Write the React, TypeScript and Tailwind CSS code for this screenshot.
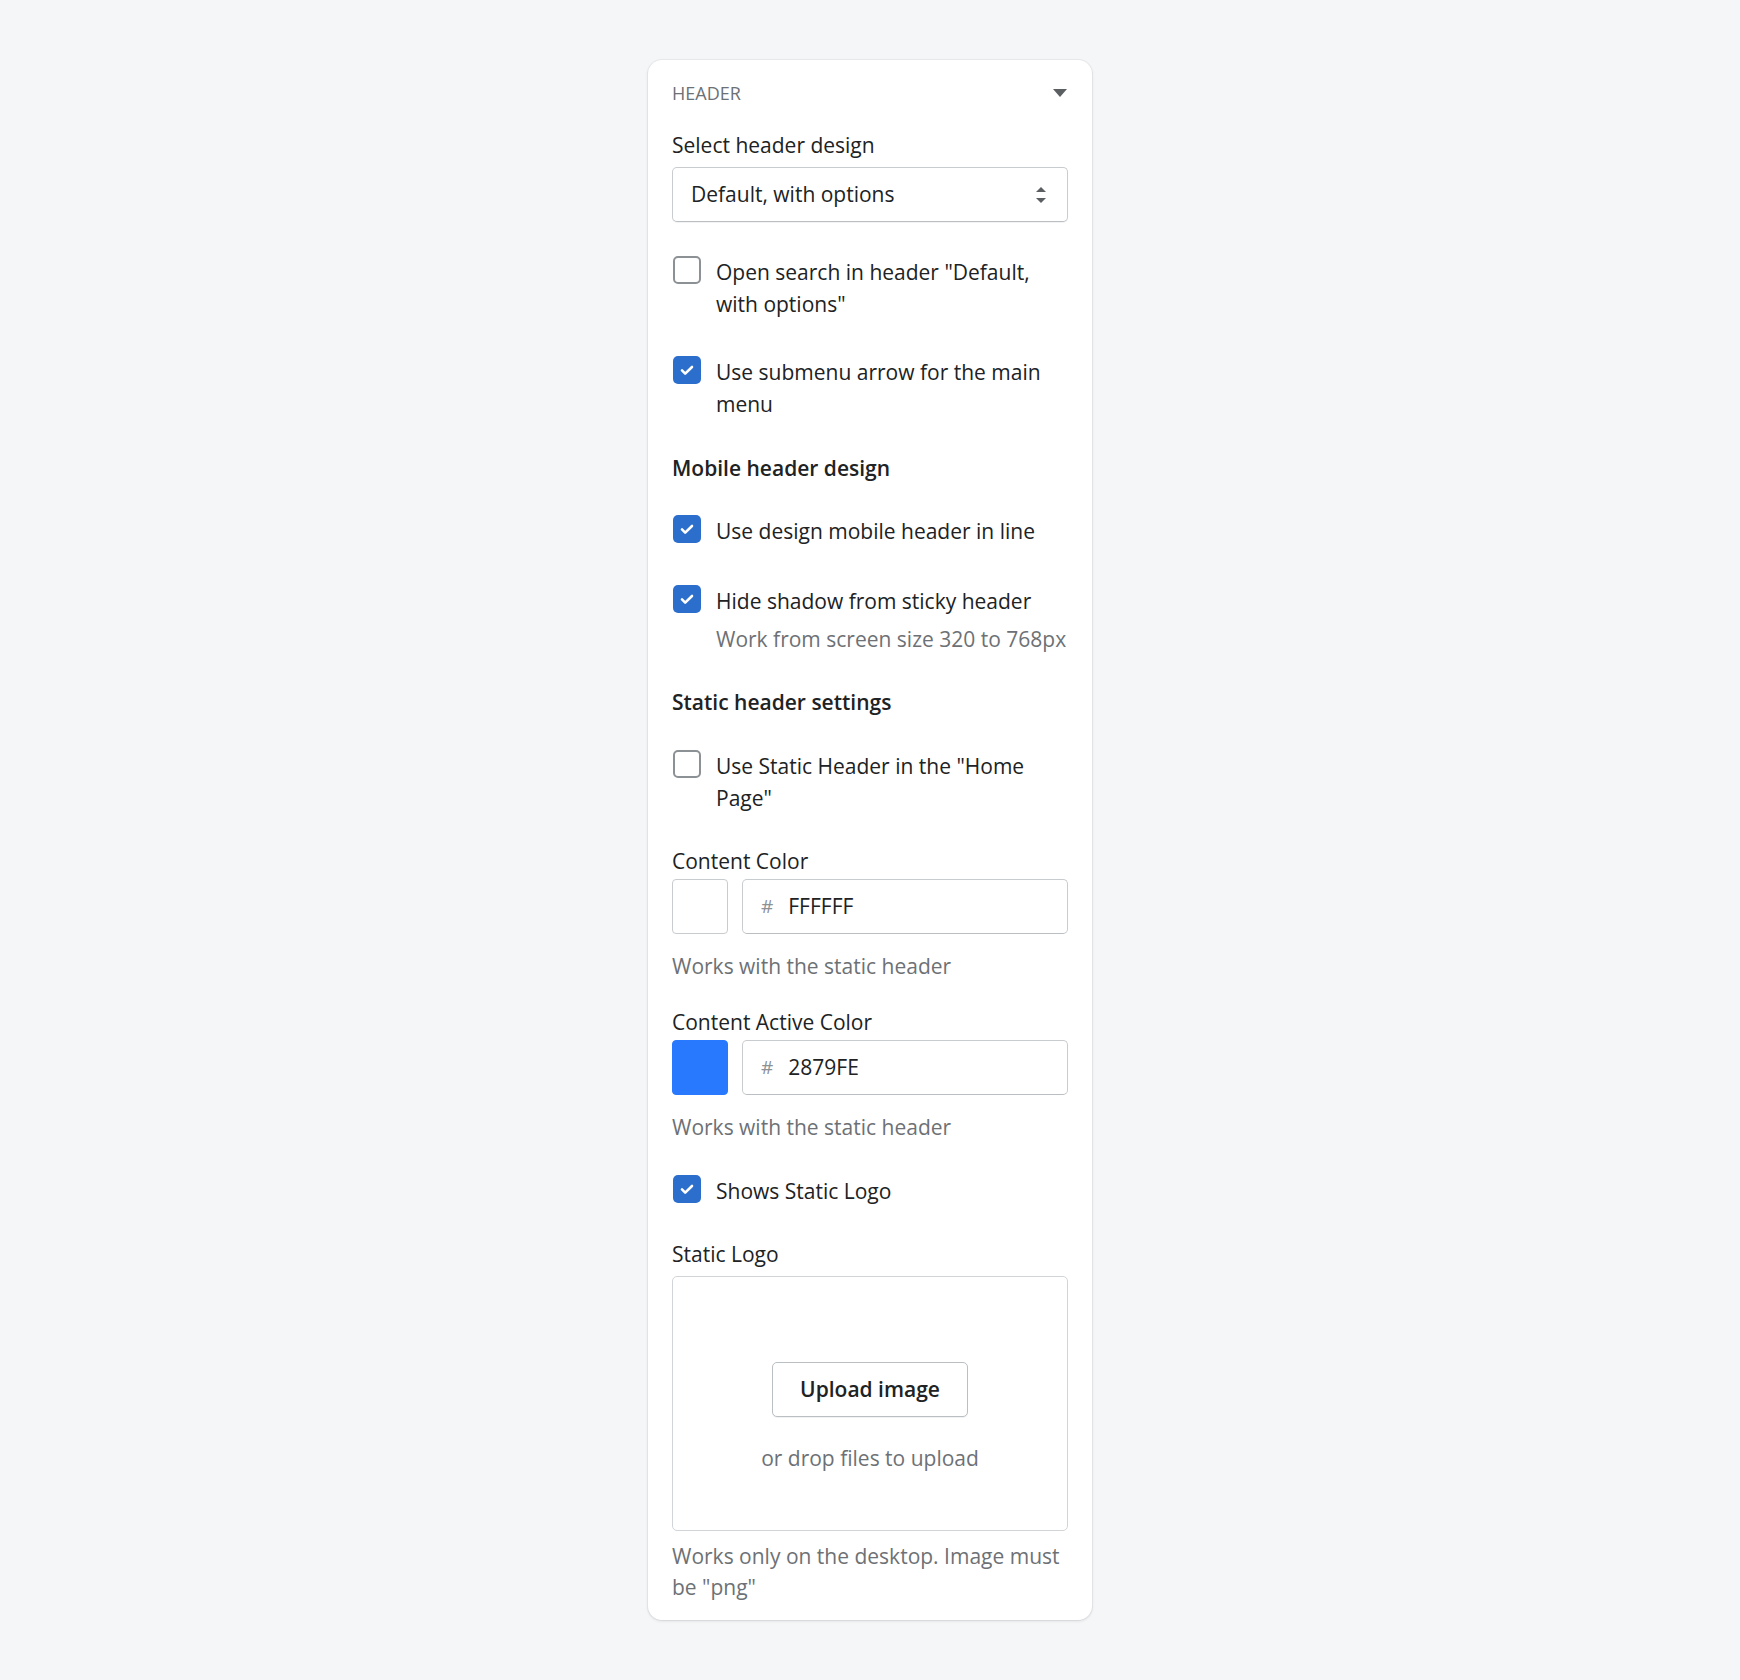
import React from 'react';

type CheckProps = {
  checked: boolean;
  children: React.ReactNode;
  help?: string;
  className?: string;
};

function CheckRow({ checked, children, help, className = '' }: CheckProps) {
  return (
    <label className={`flex items-start gap-[15px] pl-[1px] ${className}`}>
      {checked ? (
        <span className="flex h-[28px] w-[28px] shrink-0 items-center justify-center rounded-[5px] bg-[#2c6ecb]">
          <svg viewBox="0 0 20 20" className="h-[20px] w-[20px]" fill="none">
            <path d="M5 10.4l3.2 3.2L15 7" stroke="white" strokeWidth="2.6" strokeLinecap="round" strokeLinejoin="round" />
          </svg>
        </span>
      ) : (
        <span className="h-[28px] w-[28px] shrink-0 rounded-[5px] border-2 border-[#8c9196] bg-white" />
      )}
      <div className="min-w-0 flex-1">
        <div className="text-[21px] leading-[32px] text-[#202223]">{children}</div>
        {help && <div className="mt-[6px] text-[21px] leading-[32px] text-[#6d7175]">{help}</div>}
      </div>
    </label>
  );
}

function ColorField({ label, value, swatch, className = '' }: { label: string; value: string; swatch: string; className?: string }) {
  return (
    <div className={className}>
      <div className="text-[21px] leading-[28px] text-[#202223]">{label}</div>
      <div className="mt-[4px] flex gap-[14px]">
        <div
          className={`h-[55px] w-[56px] shrink-0 rounded-[4px] border ${swatch === 'blue' ? 'border-[#2879fe] bg-[#2879fe]' : 'border-[#c9cccf] bg-white'}`}
        />
        <div className="flex h-[55px] flex-1 items-center rounded-[5px] border border-[#c9cccf] border-b-[#babfc3] bg-white pl-[18px]">
          <span className="text-[19px] text-[#8c9196]">#</span>
          <span className="ml-[15px] text-[21px] text-[#202223]">{value}</span>
        </div>
      </div>
      <div className="mt-[18px] text-[21px] leading-[28px] text-[#6d7175]">Works with the static header</div>
    </div>
  );
}

export default function App() {
  return (
    <div className="min-h-screen bg-[#f4f6f8] pt-[60px] pb-[60px] font-['Open_Sans',sans-serif]">
      <div className="mx-auto w-[444px] rounded-[14px] bg-white px-[24px] pt-[20px] pb-[17px] shadow-[0_0_0_1px_rgba(63,63,68,0.05),0_1px_3px_0_rgba(63,63,68,0.15)]">
        {/* Section header */}
        <div className="flex h-[26px] items-center justify-between">
          <span className="text-[18px] font-medium uppercase text-[#6d7175]">Header</span>
          <svg viewBox="0 0 14 8" className="mr-[1px] h-[8px] w-[14px]">
            <path d="M0 0h14L7 8z" fill="#5c5f62" />
          </svg>
        </div>

        <div className="mt-[25px] text-[21px] leading-[28px] text-[#202223]">Select header design</div>
        <div className="mt-[8px] flex h-[55px] items-center justify-between rounded-[5px] border border-[#c9cccf] border-b-[#babfc3] bg-white pl-[18px] pr-[20px] shadow-[0_1px_0_rgba(22,29,37,0.05)]">
          <span className="text-[21px] text-[#202223]">Default, with options</span>
          <svg viewBox="0 0 12 18" className="h-[18px] w-[12px]">
            <path d="M6 1l5 5H1z" fill="#5c5f62" />
            <path d="M6 17l5-5H1z" fill="#5c5f62" />
          </svg>
        </div>

        <CheckRow checked={false} className="mt-[34px]">
          Open search in header "Default, with options"
        </CheckRow>
        <CheckRow checked className="mt-[36px]">
          Use submenu arrow for the main menu
        </CheckRow>

        <div className="mt-[34px] text-[21px] font-semibold leading-[28px] text-[#202223]">Mobile header design</div>
        <CheckRow checked className="mt-[33px]">
          Use design mobile header in line
        </CheckRow>
        <CheckRow checked className="mt-[38px]" help="Work from screen size 320 to 768px">
          Hide shadow from sticky header
        </CheckRow>

        <div className="mt-[33px] text-[21px] font-semibold leading-[28px] text-[#202223]">Static header settings</div>
        <CheckRow checked={false} className="mt-[34px]">
          Use Static Header in the "Home Page"
        </CheckRow>

        <ColorField label="Content Color" value="FFFFFF" swatch="white" className="mt-[33px]" />
        <ColorField label="Content Active Color" value="2879FE" swatch="blue" className="mt-[28px]" />

        <CheckRow checked className="mt-[34px]">
          Shows Static Logo
        </CheckRow>

        <div className="mt-[33px] text-[21px] leading-[28px] text-[#202223]">Static Logo</div>
        <div className="mt-[8px] flex h-[255px] flex-col items-center rounded-[5px] border border-[#d2d5d8] bg-white pt-[85px]">
          <button className="h-[55px] w-[196px] rounded-[5px] border border-[#babfc3] bg-white text-[21px] font-semibold text-[#202223] shadow-[0_1px_0_rgba(0,0,0,0.05)]">
            Upload image
          </button>
          <div className="mt-[27px] text-[21px] leading-[28px] text-[#6d7175]">or drop files to upload</div>
        </div>
        <div className="mt-[10px] text-[21px] leading-[31px] text-[#6d7175]">
          Works only on the desktop. Image must be "png"
        </div>
      </div>
    </div>
  );
}
